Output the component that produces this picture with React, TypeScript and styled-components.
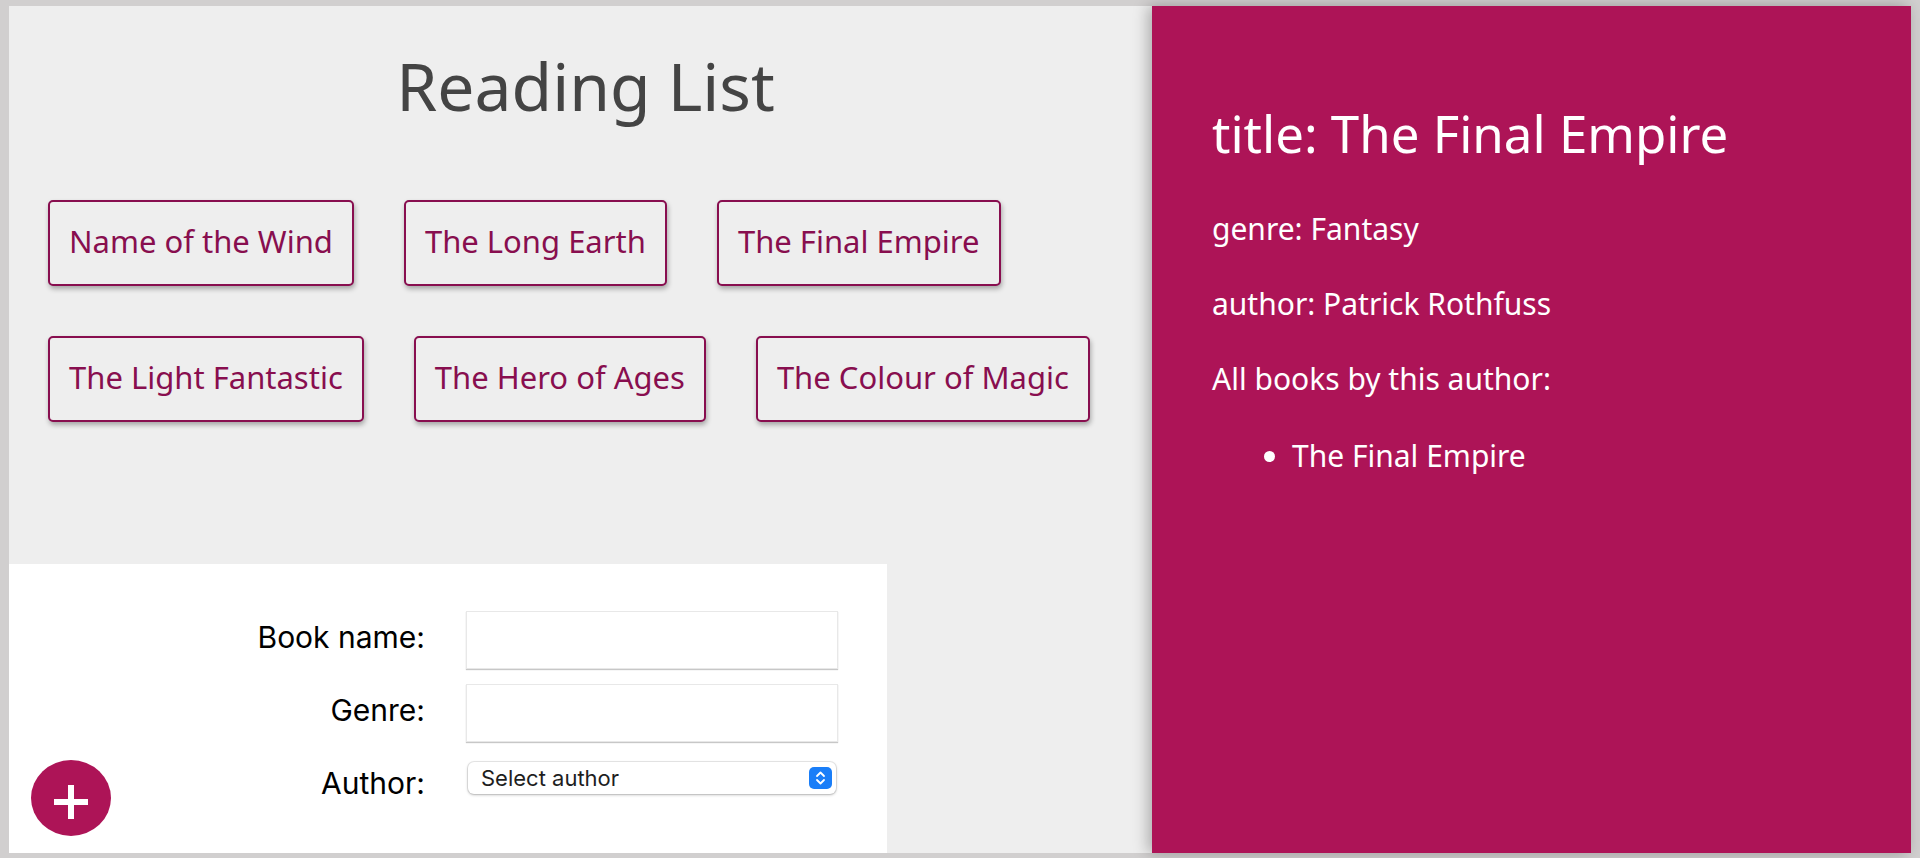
import React from "react";
import styled, { createGlobalStyle } from "styled-components";

const GlobalStyle = createGlobalStyle`
  html, body {
    margin: 0;
    padding: 0;
    background: #d1cfcf;
  }
  * { box-sizing: border-box; }
`;

const Frame = styled.div`
  display: flex;
  width: 1920px;
  height: 858px;
  padding: 6px 9px 5px 9px;
  background: #d1cfcf;
  font-family: "Noto Sans", "Open Sans", sans-serif;
`;

const MainPanel = styled.main`
  position: relative;
  flex: 0 0 1143px;
  display: flex;
  flex-direction: column;
  background: #eeeeee;
`;

const Title = styled.h1`
  margin: 40px 0 0;
  font-size: 66px;
  line-height: 78px;
  font-weight: 400;
  color: #444444;
  text-align: center;
  padding-left: 10px;
`;

const BookList = styled.ul`
  list-style: none;
  margin: 0;
  padding: 76px 14px 0 39px;
  display: flex;
  flex-wrap: wrap;
  gap: 50px;
`;

const BookButton = styled.li`
  padding: 20px 19px 24px;
  border: 2px solid #880e4f;
  border-radius: 5px;
  background: #eeeeee;
  color: #880e4f;
  font-size: 31px;
  line-height: 38px;
  box-shadow: 1px 3px 5px rgba(0, 0, 0, 0.3);
  cursor: pointer;
  white-space: nowrap;
`;

const AddForm = styled.form`
  margin-top: auto;
  width: 878px;
  height: 289px;
  background: #ffffff;
  padding-top: 47px;
  display: grid;
  grid-template-columns: 416px 372px;
  column-gap: 41px;
  row-gap: 15px;
  align-content: start;
  font-family: Inter, "Liberation Sans", sans-serif;
`;

const FieldLabel = styled.label`
  text-align: right;
  font-size: 30px;
  line-height: 52px;
  color: #000000;
`;

const TextInput = styled.input`
  height: 58px;
  width: 372px;
  border: 1px solid #e8e8e8;
  box-shadow: 0 1px 1px rgba(0, 0, 0, 0.22);
  background: #ffffff;
  outline: none;
  font-size: 20px;
  padding: 0 10px;
`;

const SelectWrap = styled.div`
  position: relative;
  margin-top: 5px;
  width: 368px;
  height: 32px;
  margin-left: 2px;
`;

const Select = styled.select`
  appearance: none;
  -webkit-appearance: none;
  width: 100%;
  height: 100%;
  border: none;
  border-radius: 6px;
  background: #ffffff;
  box-shadow: 0 0 0 1px rgba(0, 0, 0, 0.08), 0 1px 3px rgba(0, 0, 0, 0.25);
  font-family: Inter, "Liberation Sans", sans-serif;
  font-size: 22px;
  color: #1e1e1e;
  padding: 0 0 0 13px;
  outline: none;
`;

const Stepper = styled.span`
  position: absolute;
  right: 4px;
  top: 5px;
  width: 23px;
  height: 22px;
  border-radius: 5px;
  background: #1a7ef8;
  display: flex;
  align-items: center;
  justify-content: center;
  pointer-events: none;
`;

const Fab = styled.button`
  position: absolute;
  left: 22px;
  bottom: 17px;
  width: 80px;
  height: 76px;
  border: none;
  border-radius: 50%;
  background: #ad1457;
  display: flex;
  align-items: center;
  justify-content: center;
  padding: 8px 0 0;
  cursor: pointer;
`;

const DetailPanel = styled.aside`
  position: relative;
  flex: 1;
  background: #ad1457;
  color: #ffffff;
  padding: 97px 40px 0 60px;
  box-shadow: -4px 0 14px rgba(0, 0, 0, 0.28);
  display: flex;
  flex-direction: column;
`;

const DetailTitle = styled.h2`
  margin: 0 0 45px;
  font-size: 51px;
  line-height: 60px;
  font-weight: 400;
`;

const DetailLine = styled.p`
  margin: 0 0 34px;
  font-size: 30px;
  line-height: 41px;
`;

const AuthorBooks = styled.ul`
  margin: 2px 0 0;
  padding-left: 80px;
  font-size: 30px;
  line-height: 41px;
`;

const books = [
  "Name of the Wind",
  "The Long Earth",
  "The Final Empire",
  "The Light Fantastic",
  "The Hero of Ages",
  "The Colour of Magic",
];

export default function App() {
  return (
    <>
      <GlobalStyle />
      <Frame>
        <MainPanel>
          <Title>Reading List</Title>
          <BookList>
            {books.map((b) => (
              <BookButton key={b}>{b}</BookButton>
            ))}
          </BookList>
          <AddForm onSubmit={(e) => e.preventDefault()}>
            <FieldLabel htmlFor="book-name">Book name:</FieldLabel>
            <TextInput id="book-name" type="text" />
            <FieldLabel htmlFor="genre">Genre:</FieldLabel>
            <TextInput id="genre" type="text" />
            <FieldLabel htmlFor="author">Author:</FieldLabel>
            <SelectWrap>
              <Select id="author" defaultValue="">
                <option value="">Select author</option>
                <option value="1">Patrick Rothfuss</option>
                <option value="2">Terry Pratchett</option>
                <option value="3">Brandon Sanderson</option>
              </Select>
              <Stepper>
                <svg width="11" height="16" viewBox="0 0 11 16" fill="none">
                  <path d="M2 6 L5.5 2.5 L9 6" stroke="#fff" strokeWidth="1.8" strokeLinecap="round" strokeLinejoin="round" />
                  <path d="M2 10 L5.5 13.5 L9 10" stroke="#fff" strokeWidth="1.8" strokeLinecap="round" strokeLinejoin="round" />
                </svg>
              </Stepper>
            </SelectWrap>
          </AddForm>
          <Fab type="button" aria-label="Add book">
            <svg width="34" height="34" viewBox="0 0 34 34">
              <rect x="0" y="14" width="34" height="6" fill="#fff" />
              <rect x="14" y="0" width="6" height="34" fill="#fff" />
            </svg>
          </Fab>
        </MainPanel>
        <DetailPanel>
          <DetailTitle>title: The Final Empire</DetailTitle>
          <DetailLine>genre: Fantasy</DetailLine>
          <DetailLine>author: Patrick Rothfuss</DetailLine>
          <DetailLine>All books by this author:</DetailLine>
          <AuthorBooks>
            <li>The Final Empire</li>
          </AuthorBooks>
        </DetailPanel>
      </Frame>
    </>
  );
}
